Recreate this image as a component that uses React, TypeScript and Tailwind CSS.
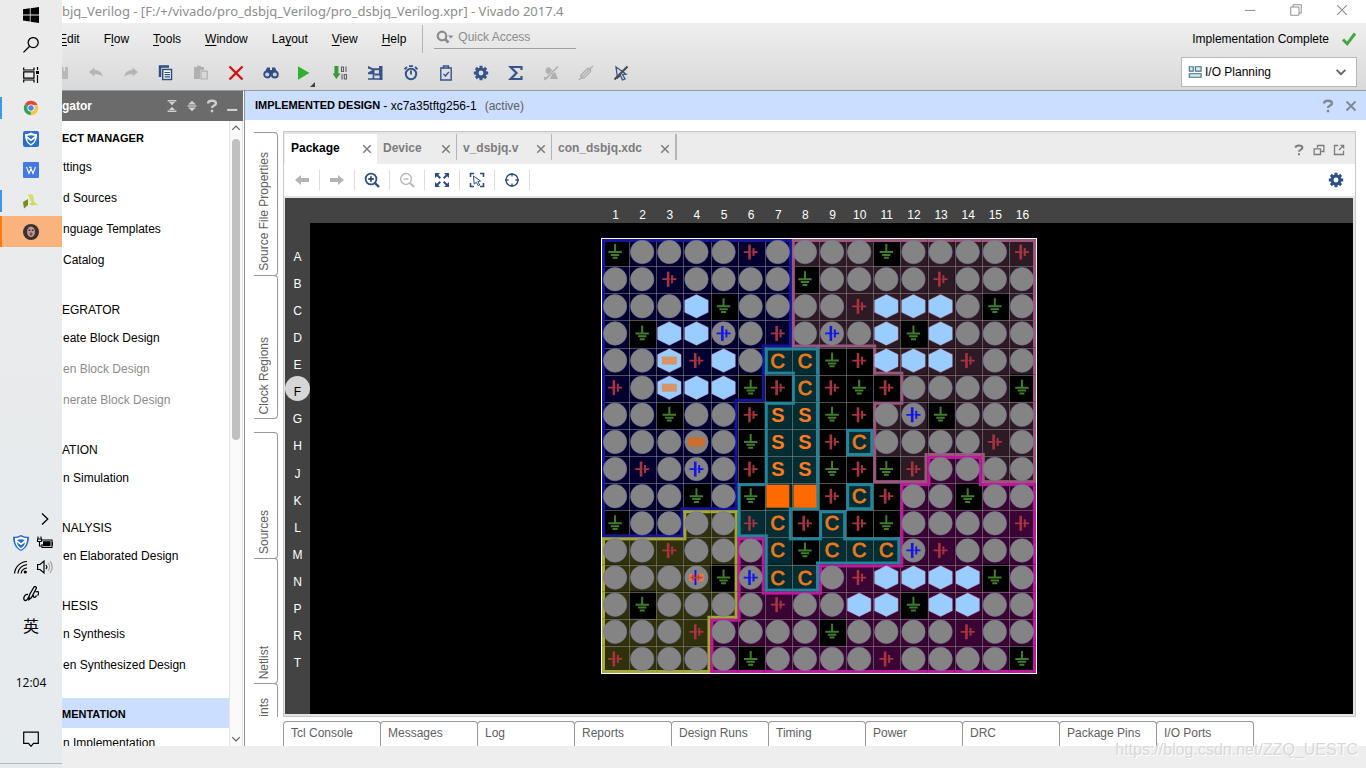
import React from "react";
import clsx from "clsx";

const CELL = 434 / 16;
const LINE = 3;

const rowNames = ["A", "B", "C", "D", "E", "F", "G", "H", "J", "K", "L", "M", "N", "P", "R", "T"];

// o = io pin, g = ground, v = supply, h = hexagon pin, d = vref pin, m/n/x = placed ports
const pins = [
  "goooovoooogoooov",
  "oovoooogoooovooo",
  "ooohgoooovhhhogo",
  "oghhdovodohghooo",
  "oomvhoCCgvhhhvoo",
  "vomhhgvCvgvoooog",
  "oogoovSSgvodgooo",
  "ooonogSSvCoooovo",
  "ovodovSSgvgvoooo",
  "ooogogQQvCvoogoo",
  "goooovCvCvgoooov",
  "oovoooCgCCCdvooo",
  "oooxgdCCovhhhhgo",
  "ogoooovoohhghhoo",
  "ooovoooogoooovoo",
  "voooogoooovoooog",
];

const banks = [
  "BBBBBBBRRRRRRRRR",
  "BBBBBBBRRRRRRRRR",
  "BBBBBBBRRRRRRRRR",
  "BBBBBBBRRRRRRRRR",
  "BBBBBBTT..RRRRRR",
  "BBBBBB.T...RRRRR",
  "BBBBB.TT..RRRRRR",
  "BBBBB.TT.TRRRRRR",
  "BBBBB.TT..RRMMRR",
  "BBBBBTTT.T.MMMMM",
  "BBBYYTT.T..MMMMM",
  "YYYYYMTTTTTMMMMM",
  "YYYYYMTTMMMMMMMM",
  "YYYYYMMMMMMMMMMM",
  "YYYYMMMMMMMMMMMM",
  "YYYYMMMMMMMMMMMM",
];

const bankColors: Record<string, { fill: string; line: string }> = {
  B: { fill: "#030030", line: "#15159c" },
  R: { fill: "#2e1a24", line: "#9c567e" },
  T: { fill: "#042c33", line: "#22859c" },
  Y: { fill: "#30300c", line: "#a6a83c" },
  M: { fill: "#3a0434", line: "#c0189c" },
};

const bankAt = (r: number, c: number) => (banks[r] && banks[r][c]) || "";

const Supply = ({ color }: { color: string }) => (
  <g stroke={color} fill="none">
    <path d="M-7 0H-2M3 0H7" strokeWidth="1.8" />
    <path d="M-1.2 -7.5V7.5" strokeWidth="2.6" />
    <path d="M2.8 -4V4" strokeWidth="2" />
    <path d="M-1 0H3" strokeWidth="1" strokeOpacity="0.7" />
  </g>
);

const Pin = ({ type }: { type: string }) => {
  if (type === "g")
    return <path d="M0 -8V0M-6.7 0H6.7M-4.2 2.9H4.2M-2.5 5.8H2.5" stroke="#437c2e" strokeWidth="2" />;
  if (type === "v") return <Supply color="#a83440" />;
  if (type === "Q") return <rect x="-11.5" y="-11.5" width="23" height="23" fill="#ff6a00" />;
  if (type === "S")
    return (
      <text y="7" textAnchor="middle" fontSize="20" fontWeight="bold" fill="#ff7a1c">
        S
      </text>
    );
  if (type === "C")
    return (
      <text y="7" textAnchor="middle" fontSize="20" fill="#e67a1c" stroke="#e67a1c" strokeWidth="0.9">
        C
      </text>
    );
  if (type === "h" || type === "m")
    return (
      <>
        <path d="M0 -11.7L11.7 -6V6L0 11.7L-11.7 6V-6Z" fill="#99ccff" stroke="#c8a0c8" strokeWidth="0.5" />
        {type === "m" && <rect x="-7.5" y="-4" width="15" height="8" fill="#d89468" />}
      </>
    );
  return (
    <>
      <circle r="11.7" fill="#848484" stroke="#7474a0" strokeWidth="0.6" />
      {type === "d" && <Supply color="#1414ea" />}
      {type === "n" && <rect x="-8.5" y="-4.5" width="17" height="9" fill="#cc6e30" />}
      {type === "x" && (
        <>
          <rect x="-7.5" y="-4" width="15" height="8" fill="#d87c50" />
          <path d="M-1 -7.5V7.5" stroke="#1414ea" strokeWidth="2" />
          <path d="M-6 0H6M-3.5 -3V3M2 -3V3" stroke="#c03840" strokeWidth="1.6" />
        </>
      )}
    </>
  );
};

const BankEdge = ({ r, c }: { r: number; c: number }) => {
  const b = bankAt(r, c);
  if (!bankColors[b]) return null;
  const x = c * CELL;
  const y = r * CELL;
  const right = x + CELL - LINE;
  const bottom = y + CELL - LINE;
  const same = (dr: number, dc: number) => bankAt(r + dr, c + dc) === b;
  const corner = (dr: number, dc: number) => same(dr, 0) && same(0, dc) && !same(dr, dc);
  return (
    <g fill={bankColors[b].line}>
      {!same(-1, 0) && <rect x={x} y={y} width={CELL} height={LINE} />}
      {!same(1, 0) && <rect x={x} y={bottom} width={CELL} height={LINE} />}
      {!same(0, -1) && <rect x={x} y={y} width={LINE} height={CELL} />}
      {!same(0, 1) && <rect x={right} y={y} width={LINE} height={CELL} />}
      {corner(-1, -1) && <rect x={x} y={y} width={LINE} height={LINE} />}
      {corner(-1, 1) && <rect x={right} y={y} width={LINE} height={LINE} />}
      {corner(1, -1) && <rect x={x} y={bottom} width={LINE} height={LINE} />}
      {corner(1, 1) && <rect x={right} y={bottom} width={LINE} height={LINE} />}
    </g>
  );
};

const PackageMap = () => {
  const cells = rowNames.flatMap((_, r) => Array.from({ length: 16 }, (_, c) => ({ r, c })));
  return (
    <svg width="436" height="436" viewBox="0 0 436 436" className="shrink-0">
      <rect x="0.5" y="0.5" width="435" height="435" fill="#000" stroke="#fff" />
      <g transform="translate(1 1)">
        {cells.map(({ r, c }) => (
          <rect
            key={r + "-" + c}
            x={c * CELL}
            y={r * CELL}
            width={CELL}
            height={CELL}
            fill={pins[r][c] === "g" ? "#000" : bankColors[bankAt(r, c)]?.fill ?? "#000"}
          />
        ))}
        {rowNames.slice(1).map((name, i) => (
          <path
            key={name}
            d={`M0 ${Math.round((i + 1) * CELL) + 0.5}H434M${Math.round((i + 1) * CELL) + 0.5} 0V434`}
            stroke="#9a9a9a"
            strokeOpacity="0.5"
          />
        ))}
        {cells.map(({ r, c }) => (
          <BankEdge key={r + "-" + c} r={r} c={c} />
        ))}
        {cells.map(({ r, c }) => (
          <g key={r + "-" + c} transform={`translate(${(c + 0.5) * CELL - 0.5} ${(r + 0.5) * CELL - 0.5})`}>
            <Pin type={pins[r][c]} />
          </g>
        ))}
      </g>
    </svg>
  );
};

const Icon = ({
  children,
  size = 16,
  className,
}: {
  children: React.ReactNode;
  size?: number;
  className?: string;
}) => (
  <svg
    width={size}
    height={size}
    viewBox="0 0 16 16"
    fill="none"
    stroke="currentColor"
    strokeWidth="1.5"
    className={clsx("shrink-0", className)}
  >
    {children}
  </svg>
);

const Close = ({ size = 10 }: { size?: number }) => (
  <Icon size={size}>
    <path d="M2 2L14 14M14 2L2 14" strokeWidth="2.4" />
  </Icon>
);

const Gear = () => (
  <Icon>
    <circle cx="8" cy="8" r="4" strokeWidth="3.2" />
    <path d="M8 .8V3M8 13V15.2M.8 8H3M13 8H15.2M2.9 2.9L4.5 4.5M11.5 11.5L13.1 13.1M2.9 13.1L4.5 11.5M11.5 4.5L13.1 2.9" strokeWidth="3" />
  </Icon>
);

const Help = ({ size = 14 }: { size?: number }) => (
  <Icon size={size}>
    <path d="M3.5 5C3.5 1 12.5 1 12.5 5C12.5 7.6 8 7.4 8 10.4M8 12.2V15" strokeWidth="2.7" />
  </Icon>
);

const ShieldFace = () => (
  <>
    <path d="M8 1.5C10 2.7 12.3 3 14 3C14.3 8.5 12 12.5 8 14.8C4 12.5 1.7 8.5 2 3C3.7 3 6 2.7 8 1.5Z" fill="#fff" stroke="none" />
    <path d="M4 5C6.5 4 9.5 4 12 5L8 8.2ZM4 7.2L8 10.3L12 7.2C11.8 9.8 10.2 11.8 8 13C5.8 11.8 4.2 9.8 4 7.2Z" fill="#2a6fd0" stroke="none" />
  </>
);

const taskApps = [
  {
    label: "Chrome",
    state: "open",
    icon: (
      <Icon>
        <g stroke="none">
          <path d="M8 8L1.9 4.2A7.2 7.2 0 0 1 14.6 5.2H8Z" fill="#e0493a" />
          <path d="M8 8L14.6 5.2A7.2 7.2 0 0 1 7.6 15.2Z" fill="#f6c640" />
          <path d="M8 8L7.6 15.2A7.2 7.2 0 0 1 1.9 4.2Z" fill="#35a057" />
          <circle cx="8" cy="8" r="3.6" fill="#fff" />
          <circle cx="8" cy="8" r="2.7" fill="#4a86e8" />
        </g>
      </Icon>
    ),
  },
  {
    label: "Security",
    state: "idle",
    icon: (
      <Icon>
        <rect width="16" height="16" rx="2" fill="#2a6fd0" stroke="none" />
        <ShieldFace />
      </Icon>
    ),
  },
  {
    label: "Writer",
    state: "idle",
    icon: (
      <Icon>
        <rect width="16" height="16" rx="1" fill="#4478e4" stroke="none" />
        <path d="M3.5 5L6 11.5L8 6.5L10 11.5L12.5 5M6 5.2H8.5" stroke="#fff" strokeWidth="1.1" />
      </Icon>
    ),
  },
  {
    label: "Vivado",
    state: "open",
    icon: (
      <Icon>
        <g stroke="none">
          <path d="M5 1L10 2L11.5 10L7.5 8Z" fill="#d6db6c" />
          <path d="M0 9L5 6V12L1 15.5Z" fill="#7d8a1c" />
          <path d="M6 11L9.5 8.5L15.5 11.5L9 12.5Z" fill="#d2d860" />
        </g>
      </Icon>
    ),
  },
  {
    label: "Photo",
    state: "alert",
    icon: (
      <Icon>
        <g stroke="none">
          <circle cx="8" cy="8" r="8" fill="#3c3030" />
          <ellipse cx="8" cy="7.8" rx="4" ry="5.4" fill="#b49a94" />
          <path d="M5.5 6.2H7.2M8.8 6.2H10.5" stroke="#3c3030" />
          <ellipse cx="8" cy="10" rx="1.5" ry="1.8" fill="#a04040" />
        </g>
      </Icon>
    ),
  },
];

const Taskbar = () => (
  <aside className="flex w-[62px] shrink-0 flex-col bg-linear-to-b from-[#ebebeb] to-[#e6ebee] text-black">
    <button aria-label="Start" className="flex h-[30px] items-center justify-center">
      <Icon>
        <path d="M0 2.3L6.8 1.3V7.5H0ZM7.6 1.2L16 0V7.5H7.6ZM0 8.4H6.8V14.6L0 13.6ZM7.6 8.4H16V16L7.6 14.8Z" fill="currentColor" stroke="none" />
      </Icon>
    </button>
    <button aria-label="Search" className="flex h-[30px] items-center justify-center">
      <Icon>
        <circle cx="10.2" cy="5.6" r="5" strokeWidth="1.3" />
        <path d="M6.6 9.2L.5 15.4" strokeWidth="1.3" />
      </Icon>
    </button>
    <button aria-label="Task view" className="mb-0.5 flex h-[30px] items-center justify-center">
      <Icon>
        <path d="M.7 .5V3H11V.5M.7 15.5V13H11V15.5M.7 4.8H11V11.2H.7ZM14.5 0V3M14.5 8V16" strokeWidth="1.2" />
        <rect x="13" y="4" width="3" height="3" fill="currentColor" stroke="none" />
      </Icon>
    </button>
    {taskApps.map((app) => (
      <button
        key={app.label}
        aria-label={app.label}
        className={clsx(
          "flex h-[31px] items-center",
          app.state === "alert" && "bg-[#fbb37d]"
        )}
      >
        <span
          className={clsx(
            "w-0.5",
            app.state === "open" && "h-[22px] bg-[#3f97e8]",
            app.state === "alert" && "h-full bg-[#ff7a0c]"
          )}
        />
        <span className="flex flex-1 justify-center pr-0.5">{app.icon}</span>
      </button>
    ))}

    <div className="mt-auto flex flex-col">
      <button aria-label="Show hidden icons" className="flex h-6 items-center justify-end pr-[9px]">
        <Icon>
          <path d="M5 2.5L10.8 8L5 13.5" strokeWidth="1.3" />
        </Icon>
      </button>
      <div className="flex h-6 items-center justify-center gap-2 pl-1">
        <Icon>
          <path d="M8 0C10.5 1.3 13.3 1.8 16 1.8C16 8.5 13.5 13.5 8 16C2.5 13.5 0 8.5 0 1.8C2.7 1.8 5.5 1.3 8 0Z" fill="#2a6fd0" stroke="none" />
          <ShieldFace />
        </Icon>
        <Icon>
          <path d="M4.5 5H15V12.5H5V9M15.5 7V10.5M1 1.5V4M4 1.5V4M.5 4H4.5V6.5H.5ZM2.5 7V11H5" strokeWidth="1.1" />
          <rect x="6" y="6.2" width="7.6" height="5" fill="currentColor" stroke="none" />
        </Icon>
      </div>
      <div className="flex h-6 items-center justify-center gap-2 pl-1">
        <Icon>
          <path d="M1.5 14.5A13 13 0 0 1 14 2.5M4.8 14.5A10 10 0 0 1 14 5.6M8 14.5A7 7 0 0 1 14 9" strokeWidth="1.2" />
          <circle cx="12.3" cy="13" r="1.6" fill="currentColor" stroke="none" />
        </Icon>
        <Icon>
          <path d="M.6 5.5H3L7 2V14L3 10.5H.6Z" strokeWidth="1.2" />
          <path d="M9 6A3 3 0 0 1 9 10" strokeWidth="1.1" />
          <path d="M11 4A6 6 0 0 1 11 12M13 2.2A9 9 0 0 1 13 13.8" stroke="#9a9a9a" strokeWidth="1.1" />
        </Icon>
      </div>
      <button aria-label="Ink workspace" className="flex h-[30px] items-center justify-center">
        <Icon>
          <path d="M5 8.5C1 7.5 -.5 14 2 14.5C5 15 5.5 10.5 7.5 7L11 1C12 -.2 14 1 13.2 2.5L8.5 11.5L6 13.5L6.2 10M12.5 6C16 4.5 16.5 7.5 14.5 9.5M10.5 9C9.8 12 12.5 12 13.5 9.5" strokeWidth="1.3" />
        </Icon>
      </button>
      <button className="h-8 font-['Noto_Sans_CJK_SC',sans-serif] text-base">英</button>
      <time className="flex h-[84px] items-center justify-center font-['Open_Sans',sans-serif] text-xs">
        12:04
      </time>
      <button aria-label="Notifications" className="mb-[10px] flex h-7 items-center justify-center">
        <Icon>
          <path d="M.7 1.2H15.3V12.3H10.5L8 15.3L5.5 12.3H.7Z" strokeWidth="1.2" />
        </Icon>
      </button>
      <div className="h-[5px] border-t border-[#b4bcc0]" />
    </div>
  </aside>
);

const TitleBar = () => (
  <header className="flex h-[23px] items-center justify-between bg-white text-[#8c8c8c]">
    <span className="font-['Noto_Sans',sans-serif] text-[13px] whitespace-nowrap">
      bjq_Verilog - [F:/+/vivado/pro_dsbjq_Verilog/pro_dsbjq_Verilog.xpr] - Vivado 2017.4
    </span>
    <div className="flex items-center gap-[34px] pr-[18px] pb-1">
      <button aria-label="Minimize">
        <Icon size={12}>
          <path d="M1 8.6H15" strokeWidth="1.3" />
        </Icon>
      </button>
      <button aria-label="Restore">
        <Icon size={12}>
          <path d="M4 4V1H15V12H12M1 4H12V15H1Z" strokeWidth="1.3" />
        </Icon>
      </button>
      <button aria-label="Close">
        <Icon size={12}>
          <path d="M1.5 1.5L14.5 14.5M14.5 1.5L1.5 14.5" strokeWidth="1.4" />
        </Icon>
      </button>
    </div>
  </header>
);

const menus = [
  ["", "E", "dit"],
  ["F", "l", "ow"],
  ["", "T", "ools"],
  ["", "W", "indow"],
  ["La", "y", "out"],
  ["", "V", "iew"],
  ["", "H", "elp"],
];

const tools = [
  {
    label: "Undo",
    color: "text-[#b4b4b4]",
    icon: <path d="M1 7L6.5 2.5V5C11 5 14 7.5 15 12C12.5 9.8 10 9 6.5 9V11.5Z" fill="currentColor" stroke="none" />,
  },
  {
    label: "Redo",
    color: "text-[#b4b4b4]",
    icon: <path d="M15 7L9.5 2.5V5C5 5 2 7.5 1 12C3.5 9.8 6 9 9.5 9V11.5Z" fill="currentColor" stroke="none" />,
  },
  {
    label: "Copy",
    color: "text-[#2f4f80]",
    icon: (
      <>
        <path d="M2 12V1.5H11" strokeWidth="2.4" />
        <path d="M4.7 4.5H13.5V14.5H4.7Z" fill="#fff" />
        <path d="M6.5 7.5H12M6.5 9.6H12M6.5 11.8H12" strokeWidth="1.2" />
      </>
    ),
  },
  {
    label: "Paste",
    color: "text-[#b0b0b0]",
    icon: (
      <>
        <path d="M1 2H4V.8H8V2H11V5H7V14H1Z" fill="currentColor" stroke="none" />
        <path d="M8 6.2H14.2V14H8Z" fill="#d8d8d8" strokeWidth="1.2" />
      </>
    ),
  },
  {
    label: "Delete",
    color: "text-[#d01414]",
    icon: <path d="M1.5 1.5L14.5 14.5M14.5 1.5L1.5 14.5" strokeWidth="2.4" />,
  },
  {
    label: "Find",
    color: "text-[#2f4f80]",
    icon: (
      <>
        <path d="M2 7L4 2.5H7V5H9V2.5H12L14 7V10H2Z" fill="currentColor" stroke="none" />
        <circle cx="4.2" cy="9.5" r="3" fill="#c8d0dc" strokeWidth="1.8" />
        <circle cx="11.8" cy="9.5" r="3" fill="#c8d0dc" strokeWidth="1.8" />
      </>
    ),
  },
  {
    label: "Run",
    color: "text-[#2fb02f]",
    icon: <path d="M0 1.2L11.5 8L0 14.8Z" fill="currentColor" stroke="none" />,
  },
  {
    label: "Generate bitstream",
    color: "text-[#3a9a3a]",
    icon: (
      <>
        <path d="M1.4 1H5.4V8.5H7.6L3.4 14L-.6 8.5H1.4Z" fill="currentColor" stroke="none" />
        <path d="M8.5 2H10.5V6.5H8.5ZM13 1.5V7M9 9V14.5M11.3 9.5H13.5V14H11.3Z" stroke="#606060" strokeWidth="1.1" />
      </>
    ),
  },
  {
    label: "Open hardware",
    color: "text-[#34548a]",
    icon: (
      <>
        <path d="M0 1L5 3.2H11V1H14.5V15H11.5V10.5H6.5V9.2L0 9.2V7.6L4.5 5L0 3.4Z" fill="currentColor" stroke="none" />
        <path d="M6.5 5.2H11V8.5H6.5Z" fill="#dedede" stroke="none" />
        <path d="M5.5 9V14M0 14H12" strokeWidth="1.6" />
      </>
    ),
  },
  {
    label: "Timing",
    color: "text-[#34548a]",
    icon: (
      <>
        <circle cx="8" cy="9" r="5.2" strokeWidth="2" />
        <path d="M8 5.5V9.5M6 1.2H10M1.5 4.2L4 2M14.5 4.2L12 2" strokeWidth="1.8" />
      </>
    ),
  },
  {
    label: "Report",
    color: "text-[#34548a]",
    icon: (
      <>
        <path d="M2.8 3H13.2V15H2.8Z" strokeWidth="1.4" />
        <path d="M5.5 3.5V1H10.5V3.5M5.5 9L7.5 11L10.8 7" strokeWidth="1.4" />
      </>
    ),
  },
  { label: "Settings", color: "text-[#34548a]", icon: null },
  {
    label: "Summary",
    color: "text-[#34548a]",
    icon: <path d="M13.5 5V2H2.5L8.5 8L2.5 14H13.5V11" strokeWidth="2.2" />,
  },
  {
    label: "Unhighlight",
    color: "text-[#b0b0b0]",
    icon: (
      <>
        <path d="M1.5 15L15 1.5" strokeWidth="1.6" />
        <path d="M3 3.5L6 2L9.5 5.5L5 9.5L2.5 7ZM1 12H6L4 14H1ZM9 9L12 7L15 14H7Z" fill="currentColor" stroke="none" />
      </>
    ),
  },
  {
    label: "Unmark",
    color: "text-[#b0b0b0]",
    icon: <path d="M1 15L15 1M3 10L9 4C11 2 14 5 12 7L6 13C4.5 14 2 12 3 10ZM6 10L11 5" strokeWidth="1.4" />,
  },
  {
    label: "Unselect",
    color: "text-[#34548a]",
    icon: (
      <>
        <path d="M3 2L13 9L9.5 9.5L12 14L9.5 15L7.5 10.5L4.5 13Z" strokeWidth="1.3" />
        <path d="M1.5 14.5L14.5 1.5" stroke="#4a4a4a" strokeWidth="2.2" />
      </>
    ),
  },
];

const TopBars = () => (
  <div className="flex h-[68px] justify-between border-b border-[#929aa2] bg-linear-to-b from-[#efefef] to-[#d9d9d9]">
    <div className="flex flex-col">
      <div className="flex h-8 items-center">
        <nav className="-ml-[3px] flex gap-6">
          {menus.map(([before, key, after]) => (
            <button key={key + after} className="leading-4">
              {before}
              <span className="underline underline-offset-2">{key}</span>
              {after}
            </button>
          ))}
        </nav>
        <label className="ml-4 flex h-7 items-start border-l border-[#b4b4b4] pl-[11px] text-[#8c8c8c]">
          <span className="flex h-6 items-center border-b border-[#a0a0a0] pl-0.5">
            <svg width="18" height="16" viewBox="0 0 18 16" fill="none" stroke="currentColor">
              <circle cx="6" cy="7" r="4.3" strokeWidth="2.2" />
              <path d="M9 10L12.5 13.5" strokeWidth="2.8" />
              <path d="M12 6.5H17.5L14.8 9.5Z" fill="currentColor" stroke="none" />
            </svg>
            <input
              aria-label="Quick Access"
              placeholder="Quick Access"
              className="w-[122px] bg-transparent pl-1 outline-none placeholder:text-[#8c8c8c]"
            />
          </span>
        </label>
      </div>
      <div className="flex h-[35px] items-center">
        <button aria-label="Save" className="w-4 text-[#b8b8b8]">
          <svg width="6" height="14" viewBox="0 0 6 14">
            <path d="M0 1H6V13H0Z" fill="currentColor" />
            <path d="M1.5 1V5H3V1Z" fill="#e4e4e4" />
          </svg>
        </button>
        {tools.map((tool) => (
          <button
            key={tool.label}
            aria-label={tool.label}
            className={clsx("relative flex w-[35px] justify-center", tool.color)}
          >
            {tool.icon ? <Icon>{tool.icon}</Icon> : <Gear />}
            {tool.label === "Run" && (
              <svg width="5" height="5" className="absolute right-2 -bottom-1.5 text-[#404040]">
                <path d="M5 0V5H0Z" fill="currentColor" />
              </svg>
            )}
          </button>
        ))}
      </div>
    </div>
    <div className="flex flex-col items-end pr-[9px]">
      <div className="flex h-8 items-center gap-3">
        <span>Implementation Complete</span>
        <Icon className="text-[#3fa846]">
          <path d="M2 8.5L6.2 12.8L14 2.5" strokeWidth="3" />
        </Icon>
      </div>
      <div className="mt-0.5 flex h-[30px] w-[176px] items-center border border-[#b8b8b8] bg-white px-1.5">
        <Icon size={14} className="text-[#4a6f88]">
          <path d="M1.5 2H6V7H1.5ZM8.5 2H15V7H8.5ZM1.5 10H15V14H1.5Z" fill="#d0ecf2" strokeWidth="1.3" />
        </Icon>
        <select aria-label="Layout" className="flex-1 appearance-none bg-transparent pl-[3px] outline-none">
          <option>I/O Planning</option>
        </select>
        <Icon size={14} className="mr-0.5 text-[#606060]">
          <path d="M3 5.5L8 10.5L13 5.5" strokeWidth="2" />
        </Icon>
      </div>
    </div>
  </div>
);

const navGroups = [
  { title: "ECT MANAGER", bold: true, items: ["ttings", "d Sources", "nguage Templates", "Catalog"] },
  {
    title: "EGRATOR",
    items: ["eate Block Design", "en Block Design", "nerate Block Design"],
    disabled: ["en Block Design", "nerate Block Design"],
  },
  { title: "ATION", items: ["n Simulation"] },
  { title: "NALYSIS", items: ["en Elaborated Design"] },
  { title: "HESIS", items: ["n Synthesis", "en Synthesized Design"] },
  { title: "MENTATION", bold: true, active: true, items: ["n Implementation"] },
];

const Navigator = () => (
  <div className="flex w-[183px] shrink-0 flex-col border-r border-[#909090] bg-white">
    <div className="mr-px flex h-[30px] shrink-0 items-center justify-between bg-[#6b6b6b] pr-1 text-[#d0d0d0]">
      <span className="font-bold text-white">gator</span>
      <div className="flex items-center gap-1.5">
        <button aria-label="Collapse all">
          <Icon size={14}>
            <path d="M3 2H13M3 14H13" strokeWidth="1.8" />
            <path d="M8 7.2L4.5 3.5H11.5ZM8 8.8L4.5 12.5H11.5Z" fill="currentColor" stroke="none" />
          </Icon>
        </button>
        <button aria-label="Expand all">
          <Icon size={14}>
            <path d="M8 2L12.5 6.2H3.5ZM8 14L3.5 9.8H12.5Z" fill="currentColor" stroke="none" />
            <path d="M3 8H13" />
          </Icon>
        </button>
        <button aria-label="Navigator help">
          <Help />
        </button>
        <button aria-label="Hide navigator">
          <Icon size={14}>
            <path d="M2.5 12.5H14" strokeWidth="2.4" />
          </Icon>
        </button>
      </div>
    </div>
    <div className="flex min-h-0 flex-1">
      <div className="min-w-0 flex-1 overflow-hidden pt-px">
        {navGroups.map((group) => (
          <section key={group.title} className="mb-[17px]">
            <h3
              className={clsx(
                "flex h-[30px] items-center pt-[3px]",
                group.bold && "text-[11px] font-bold",
                group.active && "bg-[#ccdeff]"
              )}
            >
              {group.title}
            </h3>
            {group.items.map((item) => (
              <a
                key={item}
                href="#"
                className={clsx(
                  "flex h-[31px] items-center pb-0.5 pl-px whitespace-nowrap",
                  group.disabled?.includes(item) && "text-[#8c8c8c]"
                )}
              >
                {item}
              </a>
            ))}
          </section>
        ))}
      </div>
      <div className="mr-px flex w-[14px] flex-col items-center border-x border-[#e4e4e4] bg-[#fafafa] py-0.5 text-[#606060]">
        <Icon size={10}>
          <path d="M2 11L8 5L14 11" strokeWidth="2" />
        </Icon>
        <div className="mt-1.5 h-[301px] w-2 rounded-full bg-[#c0c0c0]" />
        <Icon size={10} className="mt-auto">
          <path d="M2 5L8 11L14 5" strokeWidth="2" />
        </Icon>
      </div>
    </div>
  </div>
);

const sideTabs = [
  { name: "Source File Properties", size: "h-[144px] -mb-px" },
  { name: "Clock Regions", size: "h-[144px] mb-[13px]" },
  { name: "Sources", size: "h-[127px] -mb-px" },
  { name: "Netlist", size: "h-[126px] -mb-px" },
];

const SideTabs = () => (
  <div className="flex w-[38px] shrink-0 flex-col overflow-hidden pt-px pl-[9px] text-[#606060]">
    {sideTabs.map((tab) => (
      <button
        key={tab.name}
        className={clsx(
          "flex w-6 shrink-0 items-end justify-center rounded-r border-y border-r border-[#989898] pr-1 pb-1",
          tab.size
        )}
      >
        <span className="rotate-180 leading-4 whitespace-nowrap [writing-mode:vertical-rl]">
          {tab.name}
        </span>
      </button>
    ))}
    <button className="flex min-h-0 w-6 flex-1 items-end justify-center rounded-tr border-t border-r border-[#989898] pr-1">
      <span className="rotate-180 leading-4 [writing-mode:vertical-rl]">ints</span>
    </button>
  </div>
);

const fileTabs = [
  { name: "Package", width: "w-[92px]" },
  { name: "Device", width: "w-[80px] border-r" },
  { name: "v_dsbjq.v", width: "w-[95px] border-r" },
  { name: "con_dsbjq.xdc", width: "w-[125px] border-r-2" },
];

const viewTools = [
  {
    label: "Back",
    color: "text-[#b4b4b4]",
    icon: <path d="M1 8L7 3V6H15V10H7V13Z" fill="currentColor" stroke="none" />,
  },
  {
    label: "Forward",
    color: "text-[#b4b4b4]",
    icon: <path d="M15 8L9 3V6H1V10H9V13Z" fill="currentColor" stroke="none" />,
  },
  {
    label: "Zoom in",
    color: "text-[#2f4f80]",
    icon: (
      <>
        <circle cx="7" cy="7" r="5.4" strokeWidth="1.8" />
        <path d="M11 11L15 15" strokeWidth="2.4" />
        <path d="M7 4.3V9.7M4.3 7H9.7" strokeWidth="1.8" />
      </>
    ),
  },
  {
    label: "Zoom out",
    color: "text-[#b8b8b8]",
    icon: (
      <>
        <circle cx="7" cy="7" r="5.4" />
        <path d="M11 11L15 15" strokeWidth="2.2" />
        <path d="M4.5 7H9.5" />
      </>
    ),
  },
  {
    label: "Zoom fit",
    color: "text-[#2f4f80]",
    icon: (
      <>
        <path d="M1 1H6L1 6ZM15 1V6L10 1ZM1 15V10L6 15ZM15 15H10L15 10Z" fill="currentColor" stroke="none" />
        <path d="M2 2L6.3 6.3M14 2L9.7 6.3M2 14L6.3 9.7M14 14L9.7 9.7" strokeWidth="2" />
      </>
    ),
  },
  {
    label: "Select area",
    color: "text-[#2f4f80]",
    icon: (
      <>
        <path d="M1.5 5V1.5H5M11 1.5H14.5V5M14.5 11V14.5H11M5 14.5H1.5V11" strokeWidth="1.6" />
        <path d="M4.5 4L11.5 9L8.8 9.5L10.8 13L9.2 13.6L7.4 10.3L5.2 12Z" strokeWidth="1" />
      </>
    ),
  },
  {
    label: "Auto fit selection",
    color: "text-[#2f4f80]",
    icon: (
      <>
        <circle cx="8" cy="8" r="6" strokeWidth="1.4" />
        <path d="M8 1V4.5M8 11.5V15M1 8H4.5M11.5 8H15" strokeWidth="1.4" />
      </>
    ),
  },
];

const PackagePanel = () => (
  <section className="flex min-w-0 flex-1 flex-col border border-[#c8c8c8] bg-white">
    <div className="flex h-8 shrink-0 justify-between border-t-2 border-[#e4e4e4] bg-[#ececec] pl-px">
      <div role="tablist" className="flex text-[#7c7c7c]">
        {fileTabs.map((tab, i) => (
          <div
            key={tab.name}
            className={clsx(
              "flex items-center justify-between pr-[5px] pl-1.5",
              tab.width,
              i === 0 ? "bg-white pb-0.5 text-black" : "mb-1 border-[#b4b4b4] pt-0.5"
            )}
          >
            <button role="tab" aria-selected={i === 0} className="font-bold">
              {tab.name}
            </button>
            <button aria-label={"Close " + tab.name} className="pt-0.5 text-[#7c7c7c]">
              <Close />
            </button>
          </div>
        ))}
      </div>
      <div className="flex items-center gap-2 pt-0.5 pr-2.5 text-[#7c7c7c]">
        <button aria-label="Panel help">
          <Help size={12} />
        </button>
        <button aria-label="Maximize">
          <Icon size={12}>
            <path d="M6 5V2H14.5V10H11M1.5 6.5H10V14H1.5Z" strokeWidth="1.7" />
          </Icon>
        </button>
        <button aria-label="Float">
          <Icon size={12}>
            <path d="M7 2H2V14H14V9M8 8L12 4" strokeWidth="1.8" />
            <path d="M9 1H15V7Z" fill="currentColor" stroke="none" />
          </Icon>
        </button>
      </div>
    </div>
    <div className="mx-px flex h-8 shrink-0 items-center justify-between pr-2.5">
      <div className="flex">
        {viewTools.map((tool) => (
          <button
            key={tool.label}
            aria-label={tool.label}
            className={clsx("flex h-5 w-[35px] items-center justify-center border-r border-[#dcdcdc]", tool.color)}
          >
            <Icon>{tool.icon}</Icon>
          </button>
        ))}
      </div>
      <button aria-label="Package settings" className="text-[#2f4f80]">
        <Gear />
      </button>
    </div>
    <div className="flex min-h-0 flex-1 flex-col border-t-2 border-r-2 border-b-2 border-l border-[#e4e4e4] bg-black text-white">
      <div className="flex h-[25px] shrink-0 justify-center bg-[#434343]">
        <div className="grid w-[434px] grid-cols-16 items-center pt-2 text-center">
          {rowNames.map((name, i) => (
            <span key={name}>{i + 1}</span>
          ))}
        </div>
      </div>
      <div className="flex min-h-0 flex-1">
        <div className="w-[25px] bg-[#434343] pt-4">
          <div className="grid h-[434px] grid-rows-16 items-center">
            {rowNames.map((name) => (
              <span
                key={name}
                className={clsx(
                  "flex size-[25px] items-center justify-center rounded-full pt-2",
                  name === "F" && "bg-[#d6d6d6] text-black"
                )}
              >
                {name}
              </span>
            ))}
          </div>
        </div>
        <div className="flex flex-1 justify-center overflow-hidden pt-[15px] pr-[25px]">
          <PackageMap />
        </div>
      </div>
    </div>
  </section>
);

const bottomTabs = [
  "Tcl Console",
  "Messages",
  "Log",
  "Reports",
  "Design Runs",
  "Timing",
  "Power",
  "DRC",
  "Package Pins",
  "I/O Ports",
];

const App = () => {
  return (
    <div className="relative flex h-screen overflow-hidden bg-[#eeeeee] font-['Liberation_Sans',Arial,sans-serif] text-xs text-black">
      <Taskbar />
      <div className="flex min-w-0 flex-1 flex-col overflow-hidden pb-[22px]">
        <TitleBar />
        <TopBars />
        <div className="flex min-h-0 flex-1">
          <Navigator />
          <main className="flex min-w-0 flex-1 flex-col bg-white">
            <div className="flex h-[29px] shrink-0 items-center bg-[#ccdeff] pr-[9px] pl-2.5">
              <h1 className="text-[11px] font-bold">IMPLEMENTED DESIGN</h1>
              <span className="ml-[3px]">- xc7a35tftg256-1</span>
              <span className="ml-2 text-[#606060]">(active)</span>
              <div className="ml-auto flex items-center gap-2.5 text-[#7f8794]">
                <button aria-label="Design help">
                  <Help />
                </button>
                <button aria-label="Close design">
                  <Close size={12} />
                </button>
              </div>
            </div>
            <div className="flex min-h-0 flex-1 pt-[11px] pr-2.5">
              <SideTabs />
              <PackagePanel />
            </div>
            <div className="ml-[38px] flex h-[29px] shrink-0 pt-1">
              {bottomTabs.map((tab) => (
                <button
                  key={tab}
                  className="-mr-px w-[98px] shrink-0 rounded-t border-x border-t border-[#989898] pb-[3px] pl-[7px] text-left text-[#606060]"
                >
                  {tab}
                </button>
              ))}
            </div>
          </main>
        </div>
      </div>
      <span className="absolute right-2 bottom-1.5 text-base text-[#d8d8d8] [text-shadow:1px_1px_0_#ffffff]">
        https://blog.csdn.net/ZZQ_UESTC
      </span>
    </div>
  );
};

export default App;
